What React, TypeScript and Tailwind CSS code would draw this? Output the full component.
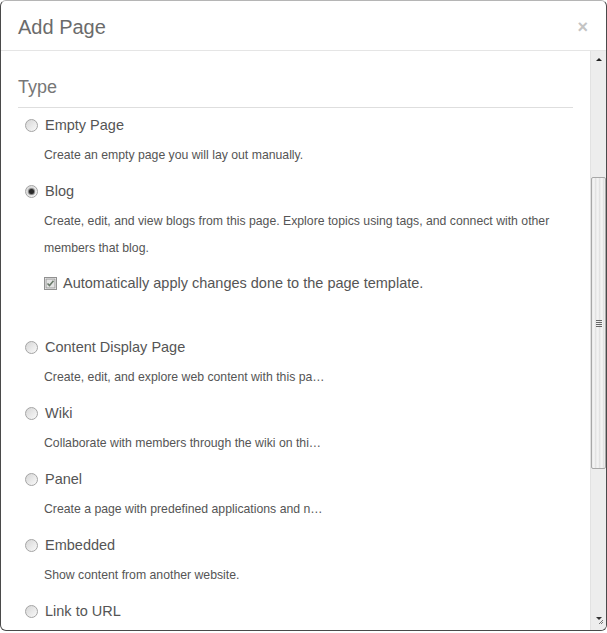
import React from 'react'

type Item = {
  label: string
  desc: string
  checked?: boolean
  extra?: boolean
}

const items: Item[] = [
  { label: 'Empty Page', desc: 'Create an empty page you will lay out manually.' },
  {
    label: 'Blog',
    desc: 'Create, edit, and view blogs from this page. Explore topics using tags, and connect with other members that blog.',
    checked: true,
    extra: true,
  },
  { label: 'Content Display Page', desc: 'Create, edit, and explore web content with this pa…' },
  { label: 'Wiki', desc: 'Collaborate with members through the wiki on thi…' },
  { label: 'Panel', desc: 'Create a page with predefined applications and n…' },
  { label: 'Embedded', desc: 'Show content from another website.' },
  { label: 'Link to URL', desc: '' },
]

function Radio({ checked }: { checked?: boolean }) {
  return (
    <span className="flex h-[13px] w-[13px] shrink-0 items-center justify-center rounded-full border border-[#a4a4a4] bg-linear-to-br from-[#d6d6d6] to-[#fafafa]">
      {checked && <span className="h-[5px] w-[5px] rounded-full bg-[#2a2a2a] shadow-[0_0_1px_1px_#777]" />}
    </span>
  )
}

function Checkbox() {
  return (
    <svg width="13" height="13" viewBox="0 0 13 13" className="shrink-0">
      <rect x="0.5" y="0.5" width="12" height="12" fill="#fff" stroke="#222" strokeDasharray="1 1" />
      <rect x="2" y="2" width="9" height="9" fill="#e4e4e4" stroke="#9a9a9a" />
      <path d="M3.5 6.5 L5.5 8.5 L9.5 3.8" fill="none" stroke="#6a7a6a" strokeWidth="1.6" />
    </svg>
  )
}

function Scrollbar() {
  return (
    <div className="flex w-[16px] shrink-0 flex-col border-l border-[#e2e2e2] bg-[#ededed]">
      <div className="flex h-[14px] items-center justify-center pt-[2px]">
        <span className="h-0 w-0 border-x-[3px] border-b-[3px] border-x-transparent border-b-[#222]" />
      </div>
      <div className="h-[112px]" />
      <div className="flex h-[292px] items-center justify-center rounded-[2px] border border-[#a8a8a8] bg-[repeating-linear-gradient(90deg,#e9e9e9_0px,#f6f6f6_2px,#dcdcdc_4px)]">
        <div className="flex flex-col gap-[1px]">
          <span className="h-[1px] w-[6px] bg-[#666]" />
          <span className="h-[1px] w-[6px] bg-[#666]" />
          <span className="h-[1px] w-[6px] bg-[#666]" />
          <span className="h-[1px] w-[6px] bg-[#666]" />
        </div>
      </div>
      <div className="flex-1" />
      <div className="flex h-[14px] items-start justify-end pr-[2px]">
        <svg width="9" height="9" viewBox="0 0 9 9">
          <path d="M1 1h6l-3 3z" fill="#333" />
          <path d="M8 4L4 8M8 6L6 8" stroke="#777" strokeWidth="1" />
        </svg>
      </div>
    </div>
  )
}

export default function App() {
  return (
    <div className="h-[633px] w-[607px] bg-white font-[family-name:'Liberation_Sans',Arial,sans-serif]">
      <div className="flex h-[631px] flex-col overflow-hidden rounded-[6px] border border-[#4a4a4a] border-t-[#b5b5b5] bg-white">
        {/* Header */}
        <div className="flex h-[50px] shrink-0 items-center justify-between border-b border-[#e5e5e5] pl-[17px] pr-[18px] pt-[2px]">
          <h1 className="text-[20px] leading-[24px] text-[#6b6b6b]">Add Page</h1>
          <span className="text-[18px] font-bold leading-none text-[#c4c4c4]">×</span>
        </div>

        {/* Body */}
        <div className="flex min-h-0 flex-1">
          <div className="flex-1 overflow-hidden pl-[17px] pr-[17px] pt-[24px]">
            <h2 className="border-b border-[#dedede] pb-[8px] text-[18px] leading-[24px] text-[#777]">Type</h2>

            <div className="pt-[7px]">
              {items.map((item, i) => (
                <div key={item.label} className={i === 0 ? '' : i === 2 ? 'mt-[44px]' : 'mt-[12px]'}>
                  <label className="flex items-center gap-[7px] pl-[7px] text-[14.5px] leading-[20px] text-[#555]">
                    <Radio checked={item.checked} />
                    {item.label}
                  </label>
                  {item.desc && (
                    <p className="mt-[7px] pl-[26px] pr-[4px] text-[12.25px] leading-[27px] text-[#555]">{item.desc}</p>
                  )}
                  {item.extra && (
                    <label className="mt-[11px] flex items-center gap-[6px] pl-[26px] text-[14.5px] leading-[20px] text-[#555]">
                      <Checkbox />
                      Automatically apply changes done to the page template.
                    </label>
                  )}
                </div>
              ))}
            </div>
          </div>
          <Scrollbar />
        </div>
      </div>
    </div>
  )
}
